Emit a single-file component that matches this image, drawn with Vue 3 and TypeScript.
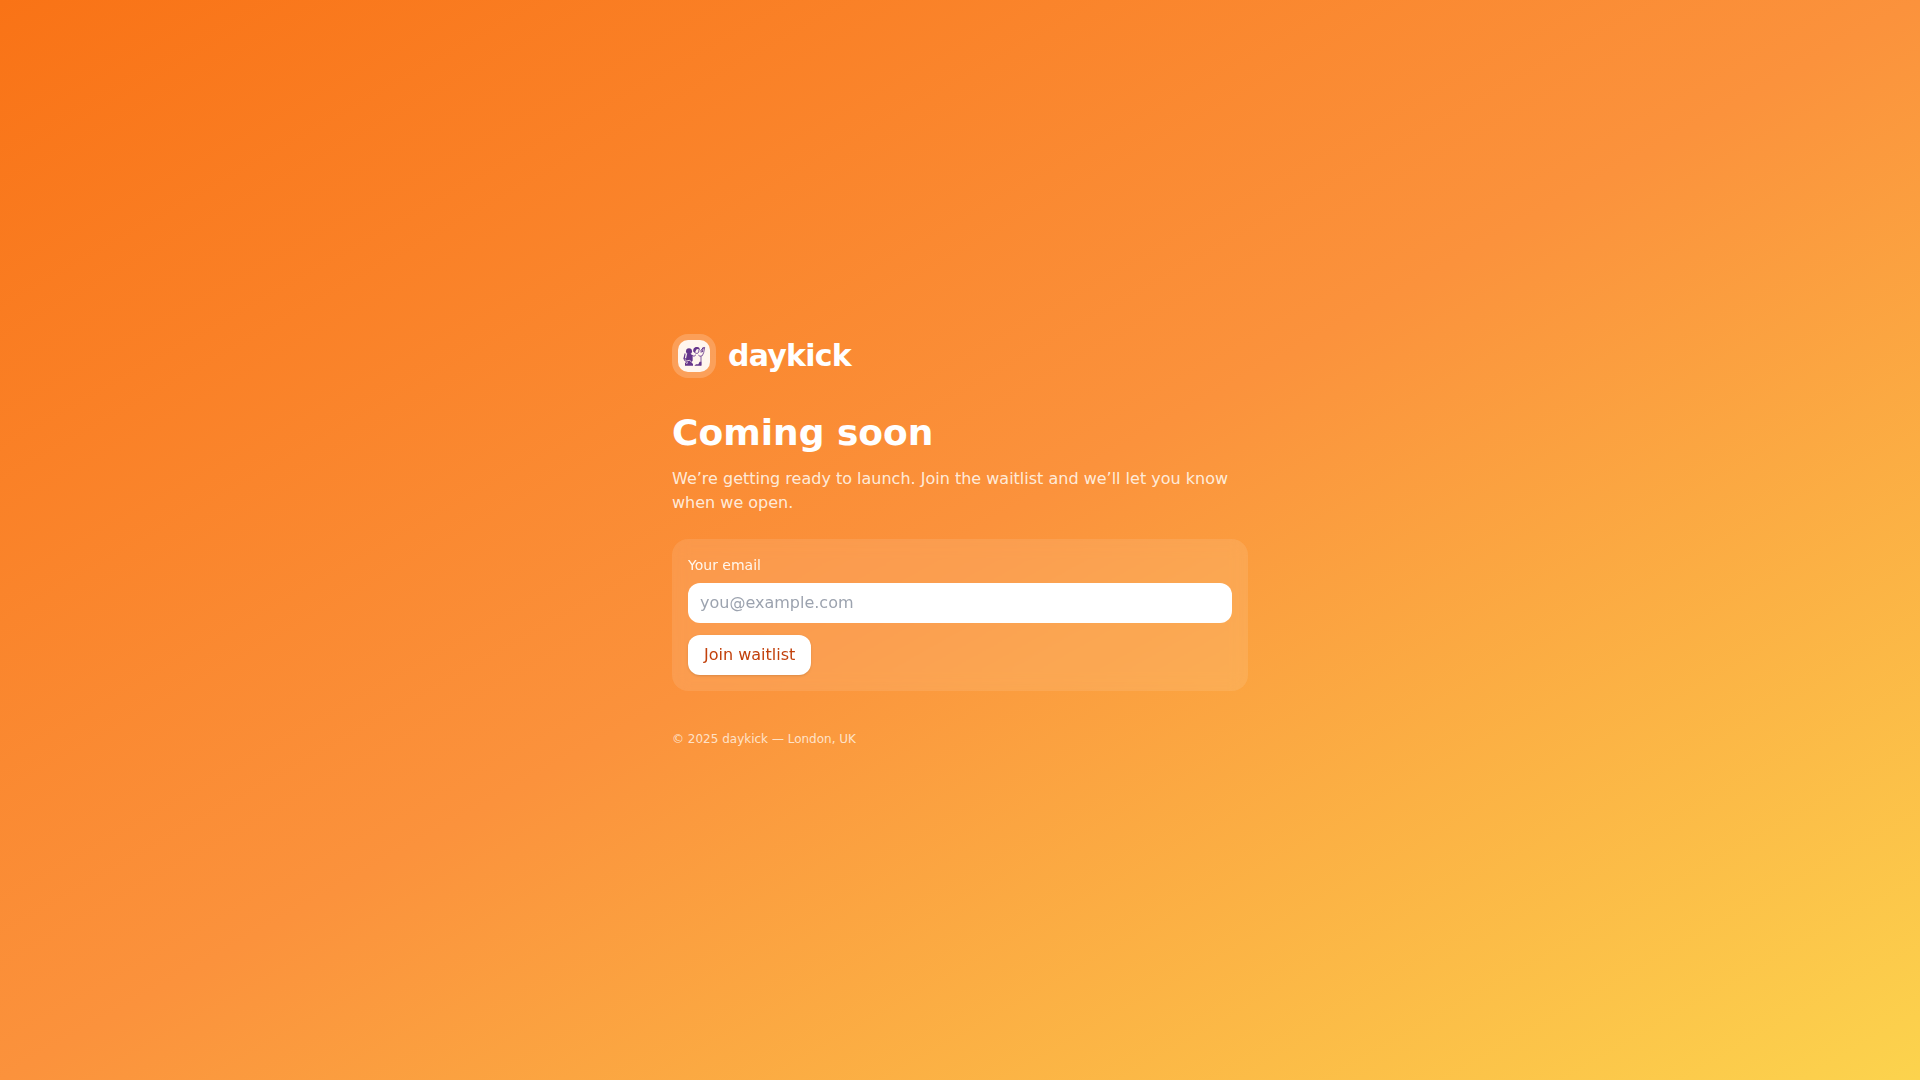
<script setup lang="ts">
import { ref } from 'vue'

const email = ref<string>('')
const year = 2025
</script>

<template>
  <main class="page">
    <div class="content">
      <header class="brand">
        <span class="brand-tile">
          <svg class="brand-logo" viewBox="0 0 96 96" aria-hidden="true">
            <rect width="96" height="96" fill="#fff6ee" />
            <g fill="#65358a">
              <circle cx="33" cy="34" r="9" />
              <path d="M27 42h12l5 5v15l-4 5 5 5v5H21v-8l4-3-5-3-4-7 4-16 3 1-2 12 3 3z" />
              <path d="M46 35c-2-9 4-14 10-14 6-1 10 3 9 9l-4-3-5 1-3 5-2 5z" />
              <path d="M49 77l5-4h7l4-8h5v12z" />
            </g>
            <g fill="none" stroke="#65358a" stroke-width="2.5" stroke-linecap="round" stroke-linejoin="round">
              <path d="M50 37l4 3h5l3-4 1-7" />
              <path d="M43 46l5 3 5-4M62 46l4 3 7-2 4-9 3-16-5 4-2 9" />
              <path d="M69 50v25" />
              <path d="M68 33l8-11M69 36l4-1" stroke-width="3" />
            </g>
            <path d="M20 58l6 5 8-2 6 4M28 66l-2 6" fill="none" stroke="#fff6ee" stroke-width="2.5" />
          </svg>
        </span>
        <span class="brand-name">daykick</span>
      </header>

      <h1 class="title">Coming soon</h1>
      <p class="lead">We’re getting ready to launch. Join the waitlist and we’ll let you know when we open.</p>

      <form class="card" @submit.prevent>
        <label class="label" for="email">Your email</label>
        <input id="email" v-model="email" class="field" type="email" placeholder="you@example.com" required />
        <button class="submit" type="submit">Join waitlist</button>
      </form>

      <footer class="footer">© {{ year }} daykick — London, UK</footer>
    </div>
  </main>
</template>

<style>
body {
  margin: 0;
}
</style>

<style scoped>
.page {
  box-sizing: border-box;
  min-height: 100vh;
  display: flex;
  align-items: center;
  justify-content: center;
  padding: 24px;
  background: linear-gradient(to bottom right, #f97316, #fb923c, #fcd34d);
  color: #fff;
  font-family: "DejaVu Sans", sans-serif;
  font-size: 16px;
  line-height: 24px;
}

.content {
  width: 100%;
  max-width: 576px;
}

.brand {
  display: flex;
  align-items: center;
  gap: 12px;
  margin-bottom: 32px;
}

.brand-tile {
  display: flex;
  padding: 6px;
  border-radius: 16px;
  background: rgb(255 255 255 / 20%);
}

.brand-logo {
  width: 32px;
  height: 32px;
  border-radius: 10px;
}

.brand-name {
  font-size: 30px;
  line-height: 36px;
  font-weight: 700;
  letter-spacing: -0.025em;
}

.title {
  margin: 0 0 12px;
  font-size: 36px;
  line-height: 45px;
  font-weight: 700;
}

.lead {
  margin: 0 0 24px;
  color: rgb(255 247 237 / 90%);
}

.card {
  display: flex;
  flex-direction: column;
  align-items: flex-start;
  padding: 16px;
  border-radius: 16px;
  background: rgb(255 255 255 / 10%);
  backdrop-filter: blur(8px);
}

.label {
  margin-bottom: 8px;
  font-size: 14px;
  line-height: 20px;
  color: #fff7ed;
}

.field {
  box-sizing: border-box;
  width: 100%;
  margin: 0 0 12px;
  padding: 8px 12px;
  border: 0;
  border-radius: 12px;
  background: #fff;
  color: #111827;
  font: inherit;
}

.field::placeholder {
  color: #9ca3af;
  opacity: 1;
}

.submit {
  padding: 8px 16px;
  border: 0;
  border-radius: 12px;
  background: #fff;
  box-shadow: 0 1px 3px rgb(0 0 0 / 10%), 0 1px 2px -1px rgb(0 0 0 / 10%);
  color: #c2410c;
  font: inherit;
  font-weight: 500;
  cursor: pointer;
}

.footer {
  margin-top: 40px;
  font-size: 12px;
  line-height: 16px;
  color: rgb(255 247 237 / 80%);
}
</style>
